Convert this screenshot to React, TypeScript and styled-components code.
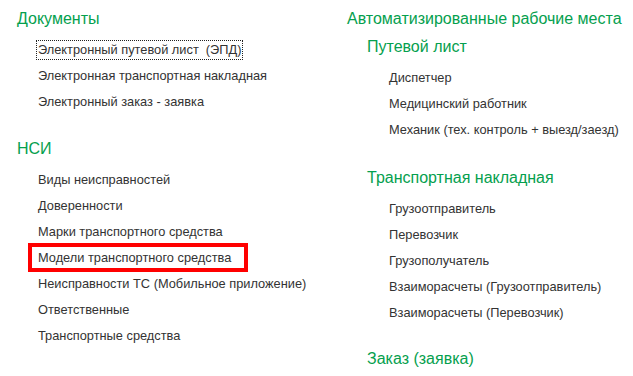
import React from "react";
import styled, { createGlobalStyle } from "styled-components";

const GlobalStyle = createGlobalStyle`
  html, body {
    margin: 0;
    padding: 0;
    background: #ffffff;
  }
  body {
    font-family: "Liberation Sans", Arial, sans-serif;
  }
`;

const Page = styled.div`
  display: grid;
  grid-template-columns: 330px 1fr;
  width: 633px;
  height: 376px;
  padding-top: 7px;
  box-sizing: border-box;
  overflow: hidden;
  background: #ffffff;
`;

const Column = styled.div<{ $indent: number }>`
  display: flex;
  flex-direction: column;
  padding-left: ${(p) => p.$indent}px;
`;

const Section = styled.section<{ $gap: number }>`
  display: flex;
  flex-direction: column;
  margin-top: ${(p) => p.$gap}px;
`;

const Heading = styled.div<{ $sub?: boolean }>`
  height: 24px;
  line-height: 24px;
  font-size: 16px;
  color: #05a04e;
  white-space: nowrap;
  padding-left: ${(p) => (p.$sub ? 20 : 0)}px;
`;

const List = styled.div<{ $indent: number }>`
  display: flex;
  flex-direction: column;
  margin-top: 6px;
  padding-left: ${(p) => p.$indent}px;
`;

const Row = styled.div<{ $marked?: boolean }>`
  position: relative;
  height: 26px;
  display: flex;
  align-items: center;

  ${(p) =>
    p.$marked &&
    `
    &::after {
      content: "";
      position: absolute;
      left: -8px;
      top: -2px;
      width: 220px;
      height: 29px;
      border: 4px solid #ff0000;
      box-sizing: border-box;
      pointer-events: none;
    }
  `}
`;

const Link = styled.span<{ $focused?: boolean }>`
  display: inline-block;
  font-size: 12.8px;
  line-height: 18px;
  color: #333333;
  white-space: pre;
  padding: 0 1px;
  border: 1px dotted ${(p) => (p.$focused ? "#222" : "transparent")};
  cursor: pointer;
`;

type Item = { text: string; focused?: boolean; marked?: boolean };
type Group = { title: string; gap: number; items: Item[] };

const left: Group[] = [
  {
    title: "Документы",
    gap: 0,
    items: [
      { text: "Электронный путевой лист  (ЭПД)", focused: true },
      { text: "Электронная транспортная накладная" },
      { text: "Электронный заказ - заявка" },
    ],
  },
  {
    title: "НСИ",
    gap: 22,
    items: [
      { text: "Виды неисправностей" },
      { text: "Доверенности" },
      { text: "Марки транспортного средства" },
      { text: "Модели транспортного средства", marked: true },
      { text: "Неисправности ТС (Мобильное приложение)" },
      { text: "Ответственные" },
      { text: "Транспортные средства" },
    ],
  },
];

const workplaces: Group[] = [
  {
    title: "Путевой лист",
    gap: 4,
    items: [
      { text: "Диспетчер" },
      { text: "Медицинский работник" },
      { text: "Механик (тех. контроль + выезд/заезд)" },
    ],
  },
  {
    title: "Транспортная накладная",
    gap: 23,
    items: [
      { text: "Грузоотправитель" },
      { text: "Перевозчик" },
      { text: "Грузополучатель" },
      { text: "Взаиморасчеты (Грузоотправитель)" },
      { text: "Взаиморасчеты (Перевозчик)" },
    ],
  },
  { title: "Заказ (заявка)", gap: 21, items: [] },
];

const Items = ({ items, indent }: { items: Item[]; indent: number }) => (
  <List $indent={indent}>
    {items.map((it) => (
      <Row key={it.text} $marked={it.marked}>
        <Link $focused={it.focused}>{it.text}</Link>
      </Row>
    ))}
  </List>
);

export default function App() {
  return (
    <>
      <GlobalStyle />
      <Page>
        <Column $indent={17}>
          {left.map((g) => (
            <Section key={g.title} $gap={g.gap}>
              <Heading>{g.title}</Heading>
              <Items items={g.items} indent={19} />
            </Section>
          ))}
        </Column>
        <Column $indent={17}>
          <Heading>Автоматизированные рабочие места</Heading>
          {workplaces.map((g) => (
            <Section key={g.title} $gap={g.gap}>
              <Heading $sub>{g.title}</Heading>
              {g.items.length > 0 && <Items items={g.items} indent={40} />}
            </Section>
          ))}
        </Column>
      </Page>
    </>
  );
}
